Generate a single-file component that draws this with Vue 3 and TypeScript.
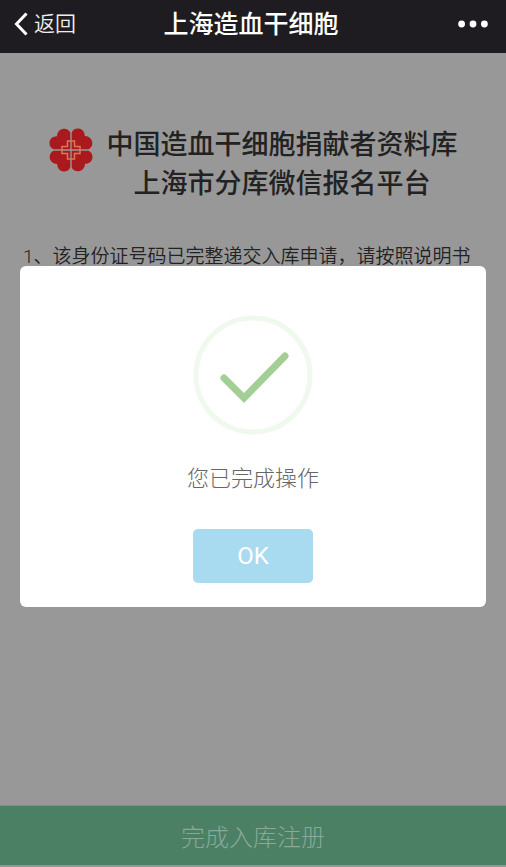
<script setup lang="ts">
import { ref } from 'vue'

const title = '上海造血干细胞'
const headingLines: string[] = ['中国造血干细胞捐献者资料库', '上海市分库微信报名平台']
const petalTransforms: string[] = [
  'rotate(0 22 22)',
  'rotate(90 22 22)',
  'rotate(180 22 22)',
  'rotate(270 22 22)',
]
const dialogOpen = ref(true)
</script>

<template>
  <div class="page">
    <header class="bar">
      <a class="back" href="#">
        <svg class="chevron" viewBox="0 0 14 24" aria-hidden="true">
          <path d="M12.5 1.5 2.5 12l10 10.5" />
        </svg>
        <span>返回</span>
      </a>
      <span class="bar-title">{{ title }}</span>
      <button class="more" type="button" aria-label="更多">
        <svg viewBox="0 0 30 8" aria-hidden="true">
          <circle cx="3.6" cy="4" r="3.4" />
          <circle cx="15" cy="4" r="3.4" />
          <circle cx="26.4" cy="4" r="3.4" />
        </svg>
      </button>
    </header>

    <main class="content">
      <div class="brand">
        <svg class="logo" viewBox="0 0 44 44" aria-hidden="true">
          <g class="petals">
            <path
              v-for="t in petalTransforms"
              :key="t"
              :transform="t"
              d="M21.3 21.3H4.5C1.5 20 .3 17.500 .5 14.500 .8 11 3.500 8.300 8 8.200 8.200 3.800 11 1 14.500 .7 17.500 .5 20 1.800 21.300 4.500Z"
            />
          </g>
          <path class="cross" d="M18.500 13h7v5.500H31v7h-5.500V31h-7v-5.500H13v-7h5.500Z" />
        </svg>
        <h1 class="heading">
          <span v-for="line in headingLines" :key="line">{{ line }}</span>
        </h1>
      </div>
      <p class="notice">1、该身份证号码已完整递交入库申请，请按照说明书</p>
    </main>

    <button class="submit" type="button">完成入库注册</button>

    <div v-if="dialogOpen" class="overlay">
      <section class="dialog" role="dialog" aria-modal="true" aria-labelledby="dialog-text">
        <svg class="success" viewBox="0 0 120 120" aria-hidden="true">
          <circle cx="60" cy="60" r="57" />
          <path d="M31 63 51 83 92 41" />
        </svg>
        <p id="dialog-text" class="message">您已完成操作</p>
        <button class="ok" type="button" @click="dialogOpen = false">OK</button>
      </section>
    </div>
  </div>
</template>

<style>
body {
  background: #999899;
}
</style>

<style scoped>
.page {
  display: flex;
  flex-direction: column;
  box-sizing: border-box;
  min-height: 100vh;
  padding-bottom: 2px;
  background: #999899;
  color: #222;
  font-family: Roboto, "Noto Sans CJK SC", sans-serif;
}

button {
  padding: 0;
  border: 0;
  font-family: inherit;
  cursor: pointer;
}

.bar {
  display: grid;
  grid-template-columns: 1fr auto 1fr;
  align-items: center;
  height: 53px;
  padding: 0 18px 6px 14px;
  box-sizing: border-box;
  background: #1e1c20;
  color: #fff;
}

.back {
  display: flex;
  align-items: center;
  gap: 6px;
  color: #eee;
  font-size: 21px;
  font-weight: 350;
  line-height: 30px;
  text-decoration: none;
}

.chevron {
  width: 14px;
  height: 24px;
  fill: none;
  stroke: #fff;
  stroke-width: 3;
}

.bar-title {
  padding-top: 2px;
  font-size: 25px;
  font-weight: 500;
  line-height: 36px;
}

.more {
  justify-self: end;
  display: flex;
  background: none;
}

.more svg {
  width: 30px;
  height: 8px;
  fill: #fff;
}

.content {
  flex: 1;
  padding: 73px 23px 0;
}

.brand {
  display: flex;
  justify-content: center;
  gap: 14px;
}

.logo {
  flex: none;
  width: 44px;
  height: 44px;
  margin-top: 2px;
}

.petals {
  fill: #a9191d;
}

.cross {
  fill: none;
  stroke: #d87a50;
  stroke-width: 1.5;
}

.heading {
  display: flex;
  flex-direction: column;
  margin: 0;
  font-size: 27px;
  font-weight: 500;
  line-height: 39px;
  text-align: center;
}

.notice {
  margin: 39px 0 0;
  font-size: 19px;
  font-weight: 350;
  line-height: 28px;
}

.submit {
  height: 60px;
  border-top: 1px solid #6d9a80;
  background: #4c8065;
  color: #8aa999;
  font-size: 24px;
  font-weight: 300;
}

.overlay {
  position: fixed;
  inset: 0;
  display: flex;
  align-items: center;
  justify-content: center;
  padding: 6px 20px 0;
}

.dialog {
  display: flex;
  flex: 1;
  flex-direction: column;
  align-items: center;
  padding: 49px 20px 24px;
  border-radius: 6px;
  background: #fff;
}

.success {
  width: 120px;
  height: 120px;
  fill: none;
}

.success circle {
  stroke: #f0f9ee;
  stroke-width: 5;
}

.success path {
  stroke: #a3cf96;
  stroke-width: 7;
  stroke-linecap: round;
}

.message {
  margin: 28px 0 34px;
  color: #666;
  font-size: 22px;
  font-weight: 300;
  line-height: 32px;
}

.ok {
  width: 120px;
  height: 54px;
  border-radius: 5px;
  background: #a9dbf0;
  color: #fff;
  font-size: 24px;
}
</style>
